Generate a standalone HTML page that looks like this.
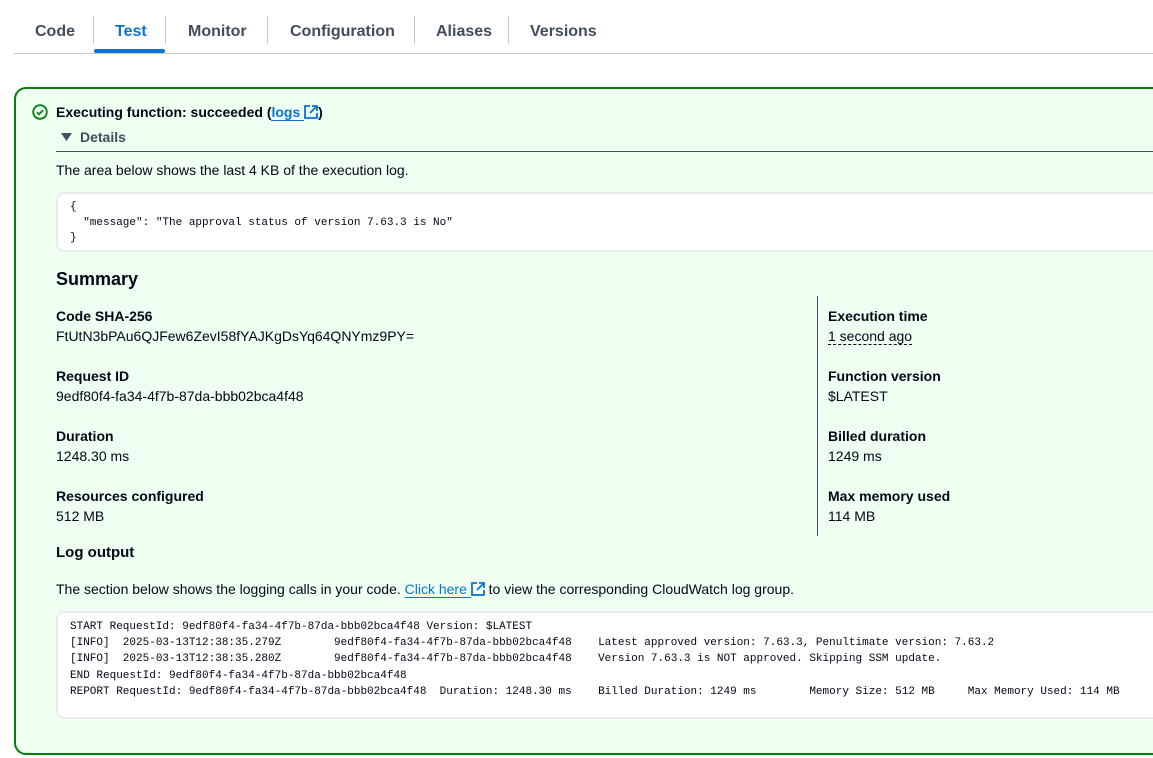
<!DOCTYPE html>
<html><head><meta charset="utf-8"><style>
*{box-sizing:border-box;margin:0;padding:0}
body{width:1153px;height:758px;overflow:hidden;background:#fff;font-family:"Liberation Sans",sans-serif;color:#000716;font-size:14px;position:relative}
.abs{position:absolute;white-space:nowrap}
.tab{position:absolute;top:23px;font-size:16px;font-weight:bold;color:#414d5c}
.sep{position:absolute;top:16px;width:1px;height:28px;background:#c6c6cd}
.panel{position:absolute;left:14px;top:87px;width:1160px;height:668px;background:#effff1;border:2px solid #037f0c;border-radius:12px}
.code{position:absolute;background:#fff;border:2px solid #e9ebed;border-radius:8px;font-family:"Liberation Mono",monospace;font-size:11px;white-space:pre;color:#000716}
.lbl{position:absolute;font-weight:bold;font-size:14px}
.val{position:absolute;font-size:14px}
a{color:#0972d3;text-decoration:none;border-bottom:1px solid #0972d3}
</style></head><body>
<div class="tab" style="left:35px">Code</div>
<div class="sep" style="left:93px"></div>
<div class="tab" style="left:115px;color:#0972d3">Test</div>
<div style="position:absolute;left:94px;top:49px;width:71px;height:4px;background:#0972d3;border-radius:2px"></div>
<div class="sep" style="left:165px"></div>
<div class="tab" style="left:188px">Monitor</div>
<div class="sep" style="left:267px"></div>
<div class="tab" style="left:290px">Configuration</div>
<div class="sep" style="left:414px"></div>
<div class="tab" style="left:436px">Aliases</div>
<div class="sep" style="left:508px"></div>
<div class="tab" style="left:530px">Versions</div>
<div style="position:absolute;left:14px;top:53px;width:1139px;height:1px;background:#c6c6cd"></div>

<div class="panel"></div>
<svg class="abs" style="left:32px;top:104px" width="16" height="16" viewBox="0 0 16 16"><circle cx="8" cy="8" r="6.8" fill="none" stroke="#037f0c" stroke-width="1.8"/><path d="M5 8.2l2 2 4-4" fill="none" stroke="#037f0c" stroke-width="1.8"/></svg>
<div class="abs" style="left:56px;top:104px;font-weight:bold">Executing function: succeeded (<a>logs </a><svg width="14" height="14" viewBox="0 0 14 14" style="vertical-align:-2px"><path d="M6 1H1v12h12V8M8 1h5v5M13 1L6 8" fill="none" stroke="#0972d3" stroke-width="1.8"/></svg>)</div>
<svg class="abs" style="left:61px;top:132px" width="12" height="10"><path d="M0 1h11L5.5 9z" fill="#414d5c"/></svg>
<div class="abs" style="left:80px;top:129px;font-weight:bold;color:#414d5c">Details</div>
<div style="position:absolute;left:56px;top:151px;width:1097px;height:1px;background:#414d5c"></div>
<div class="abs" style="left:56px;top:162px">The area below shows the last 4 KB of the execution log.</div>
<div class="code" style="left:56px;top:192px;width:1110px;height:60px;padding:6px 0 0 12px;line-height:15.5px">{
  "message": "The approval status of version 7.63.3 is No"
}</div>
<div class="abs" style="left:56px;top:269px;font-size:18px;font-weight:bold">Summary</div>

<div class="lbl" style="left:56px;top:308px">Code SHA-256</div>
<div class="val" style="left:56px;top:328px">FtUtN3bPAu6QJFew6ZevI58fYAJKgDsYq64QNYmz9PY=</div>
<div class="lbl" style="left:56px;top:368px">Request ID</div>
<div class="val" style="left:56px;top:388px">9edf80f4-fa34-4f7b-87da-bbb02bca4f48</div>
<div class="lbl" style="left:56px;top:428px">Duration</div>
<div class="val" style="left:56px;top:448px">1248.30 ms</div>
<div class="lbl" style="left:56px;top:488px">Resources configured</div>
<div class="val" style="left:56px;top:508px">512 MB</div>

<div style="position:absolute;left:817px;top:296px;width:1px;height:240px;background:#414d5c"></div>
<div class="lbl" style="left:828px;top:308px">Execution time</div>
<div class="val" style="left:828px;top:328px;border-bottom:1px dashed #000716;line-height:16px">1 second ago</div>
<div class="lbl" style="left:828px;top:368px">Function version</div>
<div class="val" style="left:828px;top:388px">$LATEST</div>
<div class="lbl" style="left:828px;top:428px">Billed duration</div>
<div class="val" style="left:828px;top:448px">1249 ms</div>
<div class="lbl" style="left:828px;top:488px">Max memory used</div>
<div class="val" style="left:828px;top:508px">114 MB</div>

<div class="abs" style="left:56px;top:544px;font-size:15px;font-weight:bold">Log output</div>
<div class="abs" style="left:56px;top:581px">The section below shows the logging calls in your code. <a>Click here </a><svg width="14" height="14" viewBox="0 0 14 14" style="vertical-align:-2px"><path d="M6 1H1v12h12V8M8 1h5v5M13 1L6 8" fill="none" stroke="#0972d3" stroke-width="1.8"/></svg> to view the corresponding CloudWatch log group.</div>
<div class="code" style="left:56px;top:611px;width:1110px;height:108px;padding:6px 0 0 12px;line-height:16.2px">START RequestId: 9edf80f4-fa34-4f7b-87da-bbb02bca4f48 Version: $LATEST
[INFO]  2025-03-13T12:38:35.279Z        9edf80f4-fa34-4f7b-87da-bbb02bca4f48    Latest approved version: 7.63.3, Penultimate version: 7.63.2
[INFO]  2025-03-13T12:38:35.280Z        9edf80f4-fa34-4f7b-87da-bbb02bca4f48    Version 7.63.3 is NOT approved. Skipping SSM update.
END RequestId: 9edf80f4-fa34-4f7b-87da-bbb02bca4f48
REPORT RequestId: 9edf80f4-fa34-4f7b-87da-bbb02bca4f48  Duration: 1248.30 ms    Billed Duration: 1249 ms        Memory Size: 512 MB     Max Memory Used: 114 MB</div>
</body></html>
